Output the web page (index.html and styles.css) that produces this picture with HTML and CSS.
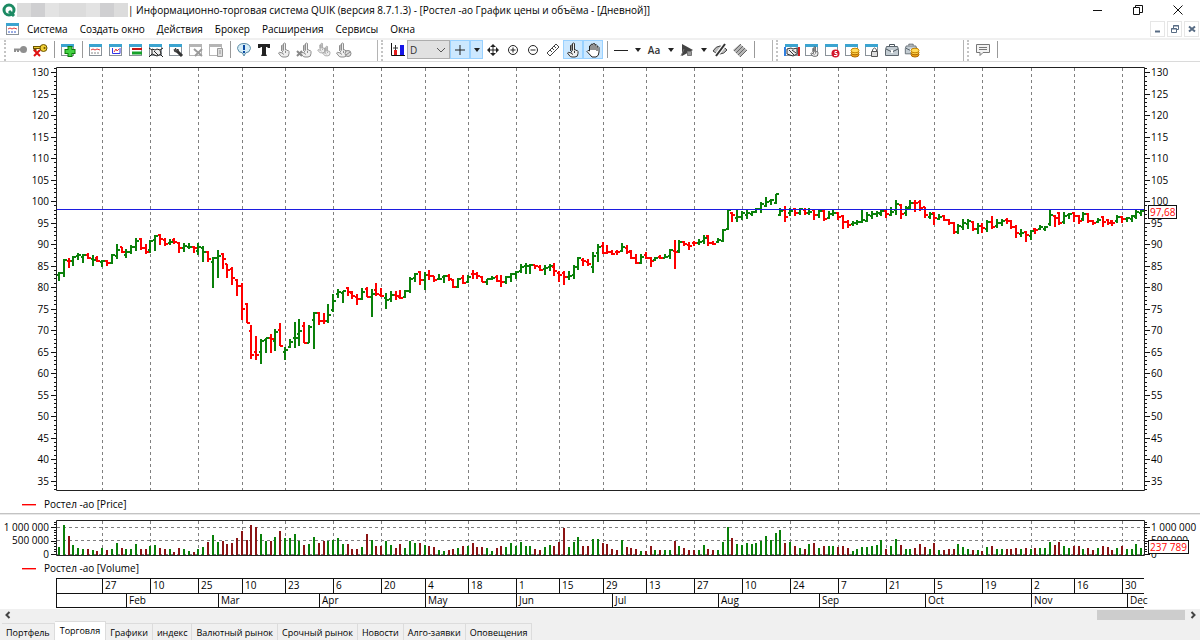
FILE: index.html
```html
<!DOCTYPE html>
<html lang="ru">
<head>
    <meta charset="UTF-8">
    <meta name="viewport" content="width=device-width, initial-scale=1.0">
    <title>Информационно-торговая система QUIK</title>
    <link rel="stylesheet" href="styles.css">
</head>
<body>
    <svg class="sprite" aria-hidden="true">
        <symbol id="win" viewBox="0 0 16 16">
            <rect x="1.500" y="2.500" width="12" height="11" fill="#fff" stroke="#8a9299"/>
            <rect x="1" y="2" width="13" height="3" fill="#3ba4d0"/>
        </symbol>
        <symbol id="win-gray" viewBox="0 0 16 16">
            <rect x="1.500" y="2.500" width="12" height="11" fill="#fff" stroke="#b5b5b5"/>
            <rect x="1" y="2" width="13" height="3" fill="#b5b5b5"/>
        </symbol>
        <symbol id="point-hand" viewBox="0 0 16 16">
            <path d="M5.500 9V3.500q.8-1 1.500 0V8M7.500 8V1.500q1-1 2 0V8q1.500-.8 1.500 .5q1.500-.6 2 1v2q0 3.500-3 3.500H7q-2 0-3-2L2.500 11q1-1.500 3 0zM6 11l2 1.500M9.500 9v2" fill="#eee" stroke="currentColor"/>
        </symbol>
        <symbol id="coins" viewBox="0 0 16 16">
            <ellipse cx="11" cy="12.500" rx="4" ry="2.500" fill="#f0a31c" stroke="#ad6b00"/>
            <ellipse cx="11" cy="10.500" rx="4" ry="2.300" fill="#ffd34d" stroke="#ad6b00"/>
            <ellipse cx="11" cy="8.500" rx="4" ry="2.300" fill="#ffdc5e" stroke="#c78500"/>
        </symbol>
        <symbol id="case" viewBox="0 0 16 16">
            <path d="M5.500 4V2.500h5V4" fill="none" stroke="#49545c"/>
            <path d="M2.500 4.500h11l1 3v6h-13v-6z" fill="#c3ccd2" stroke="#5c666e"/>
            <path d="M2 7l6 3 6-3" fill="none" stroke="#4c565e"/>
            <rect x="7" y="8" width="2" height="3" fill="#fff"/>
        </symbol>
    </svg>

    <header class="titlebar">
        <svg class="logo" viewBox="0 0 16 16"><circle cx="8" cy="8" r="5" fill="none" stroke="#1c8a63" stroke-width="3"/><path d="M8 9l5 5" stroke="#1c8a63" stroke-width="3"/></svg>
        <span class="hidden-name"><i></i><i></i><i></i><i></i><i></i><i></i><i></i><i></i></span>
        <h1>| Информационно-торговая система QUIK (версия 8.7.1.3) - [Ростел -ао График цены и объёма - [Дневной]]</h1>
        <div class="window-buttons">
            <button aria-label="Свернуть"><svg viewBox="0 0 10 10"><path d="M0 5.500h9"/></svg></button>
            <button aria-label="Развернуть"><svg viewBox="0 0 10 10"><path d="M.5 2.500h6v7h-6zM2.500 2V.5h7v7H7"/></svg></button>
            <button aria-label="Закрыть"><svg viewBox="0 0 10 10"><path d="M.5.5l9 9M9.500.5l-9 9"/></svg></button>
        </div>
    </header>

    <nav class="menu">
        <svg class="menu-icon" viewBox="0 0 16 16"><use href="#win"/><path d="M3 8l2-1 2 1 2-1 3 1" fill="none" stroke="#e23b3b"/><path d="M3 11h9" stroke="#3558c8" stroke-dasharray="2 1"/></svg>
        <a href="#">Система</a>
        <a href="#">Создать окно</a>
        <a href="#">Действия</a>
        <a href="#">Брокер</a>
        <a href="#">Расширения</a>
        <a href="#">Сервисы</a>
        <a href="#">Окна</a>
        <div class="mdi-buttons">
            <button aria-label="Свернуть окно"><svg viewBox="0 0 8 8"><path d="M1 6.500h5" stroke-width="2"/></svg></button>
            <button aria-label="Восстановить окно"><svg viewBox="0 0 8 8"><path d="M.5 3.500h5v4h-5zM2.500 3V.5h5v4H6M2 1h6M0 4h6"/></svg></button>
            <button aria-label="Закрыть окно"><svg viewBox="0 0 8 8"><path d="M1 1.500l6 5M7 1.500l-6 5" stroke-width="2"/></svg></button>
        </div>
    </nav>

    <div class="toolbar">
        <div class="group group-main">
            <button aria-label="Подключиться"><svg viewBox="0 0 16 16"><path d="M2 7.500h8M3 8v2M6 8v2" stroke="#8f8f8f" stroke-width="2"/><circle cx="11.500" cy="7.500" r="3.500" fill="#8f8f8f"/></svg></button>
            <button aria-label="Отключиться"><svg viewBox="0 0 16 16"><path d="M1 5.500h8M3 6v3" stroke="#6b5400" stroke-width="3"/><path d="M2 5.500h7" stroke="#f1cf36"/><circle cx="11.500" cy="6" r="3.500" fill="#f1cf36" stroke="#6b5400"/><circle cx="12.500" cy="6" r="1" fill="#6b5400"/><path d="M2 8l6 6M8 8l-6 6" stroke="#e01010" stroke-width="2"/></svg></button>
            <span class="sep"></span>
            <button aria-label="Создать окно"><svg viewBox="0 0 16 16"><use href="#win"/><path d="M10 4v11M4.500 9.500h11" stroke="#0b7a0b" stroke-width="5"/><path d="M10 5v9M5.500 9.500h9" stroke="#43d143" stroke-width="3"/></svg></button>
            <span class="sep"></span>
            <button aria-label="Текущие торги"><svg viewBox="0 0 16 16"><use href="#win"/><path d="M3 8l2-1 2 1 2-1 3 1" fill="none" stroke="#e23b3b"/><path d="M3 11h9" stroke="#888" stroke-dasharray="2 1"/></svg></button>
            <button aria-label="График"><svg viewBox="0 0 16 16"><use href="#win"/><path d="M4.500 6v5.500H12V6" fill="none" stroke="#3434e6"/><path d="M6 10l2-3 1 2 2-2" fill="none" stroke="#e23b3b"/></svg></button>
            <button aria-label="Котировки"><svg viewBox="0 0 16 16"><use href="#win"/><path d="M4 7h10" stroke="#c41515" stroke-width="2"/><path d="M4 11h10" stroke="#17a22b" stroke-width="3"/></svg></button>
            <button aria-label="Сделки"><svg viewBox="0 0 16 16"><use href="#win"/><path d="M1 15l3-3M15 15l-3-3M1 6l3 2M15 6l-3 2" stroke="#222"/><path d="M4 7l3 1 2-1 3 1 1 4-4 2-5-2z" fill="#eee" stroke="#222"/><path d="M6 9l4 4" stroke="#222"/></svg></button>
            <button aria-label="Настройка"><svg viewBox="0 0 16 16"><use href="#win"/><path d="M9 9l5 5" stroke="#333" stroke-width="3"/><path d="M6 7.500q0 3 3 2.500 2-1 1-3L8.500 8.500 7.500 6" fill="#555" stroke="#333"/></svg></button>
            <button aria-label="Удалить"><svg viewBox="0 0 16 16"><use href="#win-gray"/><path d="M6 7l8 7M14 7l-7 7" stroke="#9b9b9b" stroke-width="2"/></svg></button>
            <button aria-label="Экспорт"><svg viewBox="0 0 16 16"><use href="#win-gray"/><path d="M9.500 6.500h5v8h-5zM11 9h2M11 11h2" fill="#ddd" stroke="#999"/></svg></button>
            <span class="sep"></span>
            <button aria-label="Сообщения"><svg viewBox="0 0 16 16"><path d="M8 1.500q6 0 6.500 5-.5 4-5 4.500L8 14l-1.500-3q-4.500-.5-5-4.500 .5-5 6.500-5z" fill="#d5edf8" stroke="#5a8ba5"/><path d="M8 3v5M8 9v2" stroke="#0b4aa2" stroke-width="2"/></svg></button>
            <button aria-label="Текст"><svg viewBox="0 0 16 16"><path d="M2 6V2h12v4h-2l-1-1H10v7l1 2H5l1-2V5H5L4 6z" fill="#222"/></svg></button>
            <button class="off" aria-label="Заявка"><svg viewBox="0 0 16 16"><use href="#point-hand"/></svg></button>
            <button class="off" aria-label="Снять заявку"><svg viewBox="0 0 16 16"><use href="#point-hand" x="2" width="16" height="16"/><path d="M1 9l5 5M6 9l-5 5" stroke="#888" stroke-width="2"/></svg></button>
            <button class="off" aria-label="Две заявки"><svg viewBox="0 0 16 16"><use href="#point-hand" width="11" height="12"/><use href="#point-hand" x="5" y="3" width="11" height="12"/></svg></button>
            <button class="off" aria-label="Стоп-заявка"><svg viewBox="0 0 16 16"><use href="#point-hand" x="-2" width="16" height="16"/><circle cx="12" cy="11.500" r="3" fill="#ddd" stroke="#888"/><path d="M10 13l4-3" stroke="#888"/></svg></button>
        </div>

        <div class="group group-chart">
            <button aria-label="Тип графика"><svg viewBox="0 0 16 16"><path d="M2.500 1v12.500H16" fill="none" stroke="#111"/><path d="M4 6h5M6.500 3v6" stroke="#333"/><path d="M5 8h3v5H5z" fill="#e21b1b"/><path d="M11 3h4v10h-4z" fill="#1515e8"/></svg></button>
            <select aria-label="Интервал"><option>D</option></select>
            <button class="on" aria-label="Перекрестие"><svg viewBox="0 0 16 16"><path d="M8 3v10M3 8h10" stroke="#222"/></svg></button>
            <button class="on drop" aria-label="Вид перекрестия"></button>
            <button aria-label="Переместить"><svg viewBox="0 0 16 16"><path d="M8 3v10M3 8h10" stroke="#222"/><path d="M8 2l3 3H5zM8 14l3-3H5zM2 8l3-3v6zM14 8l-3-3v6z" fill="#222"/></svg></button>
            <button aria-label="Увеличить"><svg viewBox="0 0 16 16"><circle cx="8" cy="8" r="4.500" fill="none" stroke="#222"/><path d="M5.500 8h5M8 5.500v5" stroke="#222"/></svg></button>
            <button aria-label="Уменьшить"><svg viewBox="0 0 16 16"><circle cx="8" cy="8" r="4.500" fill="none" stroke="#222"/><path d="M5.500 8h5" stroke="#222"/></svg></button>
            <button aria-label="Линейка"><svg viewBox="0 0 16 16"><path d="M2 11l9-9 3 3-9 9zM5 8l2 2M7 6l2 2M9 4l2 2" fill="#fff" stroke="#444"/></svg></button>
            <button class="on" aria-label="Выбор"><svg viewBox="0 0 16 16"><use href="#point-hand"/></svg></button>
            <button class="on" aria-label="Рука"><svg viewBox="0 0 16 16"><path d="M4.500 9V4q1-1 1.500 0V2.500q1-1 2 0V2q1-1 2 0v1q1.500-1 2 .5V5q1.500-1 2 .5V10q0 4-3 5H7L2 9.500Q3 7.500 4.500 9zM6 4v4M8 3v5M10 3v5M12 5v4" fill="#fff" stroke="#222"/></svg></button>
            <span class="sep"></span>
            <button aria-label="Линия"><svg viewBox="0 0 16 16"><path d="M1 8.500h14" stroke="#222"/></svg></button>
            <button class="drop" aria-label="Виды линий"></button>
            <button class="letters">Aa</button>
            <button class="drop" aria-label="Шрифты"></button>
            <button aria-label="Фигуры"><svg viewBox="0 0 16 16"><path d="M3 2l11 6-11 6z" fill="#444"/><path d="M2 14l3-7M8.500 9.500h4v4h-4z" fill="#999" stroke="#777"/></svg></button>
            <button class="drop" aria-label="Виды фигур"></button>
            <button aria-label="Скрыть"><svg viewBox="0 0 16 16"><path d="M1 9q3-5 7-5 4 0 7 4-3 4-7 4-4 0-7-3z" fill="#bbb" stroke="#444"/><path d="M4 14l9-12" stroke="#fff" stroke-width="4"/><path d="M4 14l9-12" stroke="#333" stroke-width="2"/></svg></button>
            <button aria-label="Слои"><svg viewBox="0 0 16 16"><path d="M1 8l7-6 7 6-7 7z" fill="#b5b5b5"/><path d="M2 9l7-7M4 11l7-7M6 13l7-7M8 15l7-7" stroke="#666"/></svg></button>
            <span class="sep"></span>
        </div>

        <div class="group group-trade">
            <button aria-label="Сделки клиента"><svg viewBox="0 0 16 16"><use href="#win"/><path d="M3 7l4-1 2 1 4-1v6l-4 2-6-2z" fill="#eee" stroke="#333"/><path d="M5 8l5 5M8 8l4 3" stroke="#333"/><path d="M1 5v9" stroke="#2f7fe0" stroke-width="2"/><path d="M15 5v9" stroke="#d02020" stroke-width="2"/></svg></button>
            <button aria-label="Заявки"><svg viewBox="0 0 16 16"><use href="#win"/><use href="#point-hand" x="5" y="4" width="11" height="11"/></svg></button>
            <button aria-label="Стоп-заявки"><svg viewBox="0 0 16 16"><use href="#win"/><circle cx="11.500" cy="11.500" r="4" fill="#d3182e"/><path d="M13 9.500h-2v2h2v2h-3" fill="none" stroke="#fff"/></svg></button>
            <button aria-label="Деньги"><svg viewBox="0 0 16 16"><use href="#win"/><use href="#coins"/></svg></button>
            <button aria-label="Ограничения"><svg viewBox="0 0 16 16"><use href="#win"/><path d="M8.500 9V8q2-4 4 0v1" fill="none" stroke="#555"/><path d="M7.500 9.500h6v5h-6z" fill="#ddd" stroke="#555"/></svg></button>
            <button aria-label="Портфель клиента"><svg viewBox="0 0 16 16"><use href="#case"/></svg></button>
            <button aria-label="Портфель и деньги"><svg viewBox="0 0 16 16"><use href="#case" width="14" height="14"/><use href="#coins"/></svg></button>
        </div>

        <div class="group">
            <button aria-label="Чат"><svg viewBox="0 0 16 16"><path d="M1.500 2.500h13v8H8l-3 3v-3H1.500z" fill="#f3f3f3" stroke="#777"/><path d="M4 5.500h8M4 7.500h8" stroke="#777"/></svg></button>
            <span class="sep"></span>
        </div>
    </div>

    <main class="chart">
        <svg id="price" class="price"></svg>
        <p class="legend">Ростел -ао [Price]</p>
        <div class="splitter"></div>
        <svg id="volume" class="volume"></svg>
        <p class="legend">Ростел -ао [Volume]</p>
        <svg id="dates" class="dates"></svg>
    </main>

    <div class="scrollbar">
        <button aria-label="Влево"><svg viewBox="0 0 8 8"><path d="M5.500 1l-3 3 3 3"/></svg></button>
        <span class="thumb"></span>
        <button aria-label="Вправо"><svg viewBox="0 0 8 8"><path d="M2.500 1l3 3-3 3"/></svg></button>
    </div>

    <nav class="tabs">
        <a href="#">Портфель</a>
        <a href="#" class="active">Торговля</a>
        <a href="#">Графики</a>
        <a href="#">индекс</a>
        <a href="#">Валютный рынок</a>
        <a href="#">Срочный рынок</a>
        <a href="#">Новости</a>
        <a href="#">Алго-заявки</a>
        <a href="#">Оповещения</a>
    </nav>

    <script src="chart.js"></script>
</body>
</html>
```

FILE: styles.css
```css
* {
    box-sizing: border-box;
}
body {
    margin: 0;
    min-height: 100vh;
    display: flex;
    flex-direction: column;
    background: #fff;
    color: #000;
    font-family: "Open Sans", "Noto Sans", sans-serif;
    font-size: 10px;
    overflow: hidden;
}
button {
    border: 0;
    padding: 0;
    background: none;
    display: flex;
    align-items: center;
    justify-content: center;
    font: inherit;
    color: #333;
}
a {
    color: inherit;
    text-decoration: none;
}
.sprite {
    display: none;
}

/* title */
.titlebar {
    display: flex;
    align-items: center;
    height: 20px;
    padding: 0 2px 0 1px;
}
.titlebar h1 {
    margin: 0;
    font-size: 10px;
    font-weight: 400;
    white-space: nowrap;
}
.logo {
    width: 16px;
    height: 16px;
}
.hidden-name {
    display: flex;
    width: 111px;
    height: 14px;
}
.hidden-name i {
    flex: 1;
    background: #dcdcdc;
}
.hidden-name i:nth-child(2),
.hidden-name i:nth-child(7) {
    background: #cfcfd1;
}
.hidden-name i:nth-child(3n) {
    background: #e3e3e3;
}
.window-buttons {
    display: flex;
    margin-left: auto;
}
.window-buttons button {
    width: 40px;
    height: 18px;
}
.window-buttons svg {
    width: 10px;
    height: 10px;
    fill: none;
    stroke: #111;
}

/* menu */
.menu {
    display: flex;
    align-items: center;
    gap: 12px;
    height: 18px;
    padding: 0 1px 0 5px;
}
.menu-icon {
    width: 16px;
    height: 16px;
    margin-right: -6px;
}
.mdi-buttons {
    display: flex;
    gap: 2px;
    margin-left: auto;
}
.mdi-buttons button {
    width: 15px;
    height: 16px;
    border: 1px solid #e6e6e6;
}
.mdi-buttons svg {
    width: 8px;
    height: 8px;
    fill: none;
    stroke: #586c84;
}

/* toolbar */
.toolbar {
    display: flex;
    height: 24px;
    border-top: 2px solid #f0f0f0;
    border-bottom: 1px solid #dadada;
}
.group {
    display: flex;
    align-items: center;
    margin-left: 3px;
    padding: 0 0 2px 4px;
    border-left: 2px dotted #c4c4c4;
}
.group-main {
    flex: 0 0 374px;
    margin-left: 4px;
    border-right: 1px solid #b4b4b4;
}
.group-chart {
    flex: 0 0 392px;
    border-right: 1px solid #b4b4b4;
}
.group-trade {
    flex: 0 0 188px;
    border-right: 1px solid #b4b4b4;
}
.group button {
    width: 20px;
    height: 19px;
}
.group svg {
    width: 16px;
    height: 16px;
    flex: none;
    fill: none;
}
.group .off {
    color: #8d8d8d;
}
.group .on {
    background: #cce8ff;
    border: 1px solid #99d1ff;
}
.group .drop {
    width: 13px;
}
.drop::after {
    content: "";
    border: 3px solid transparent;
    border-top: 4px solid #222;
    border-bottom: 0;
}
.group .letters {
    font-weight: 600;
}
.sep {
    width: 8px;
    height: 17px;
    background: linear-gradient(#999, #999) center / 1px 100% no-repeat;
}
select {
    width: 43px;
    height: 19px;
    padding: 0 2px;
    border: 1px solid #adadad;
    border-radius: 0;
    appearance: none;
    font: inherit;
    color: #333;
    background: #e1e1e1;
    background-image: linear-gradient(45deg, transparent 45%, #555 45%, #555 60%, transparent 60%), linear-gradient(-45deg, transparent 45%, #555 45%, #555 60%, transparent 60%);
    background-position: right 8px center, right 4px center;
    background-size: 4px 4px;
    background-repeat: no-repeat;
}

/* chart */
.chart {
    flex: 1;
    display: flex;
    flex-direction: column;
}
.chart svg {
    width: 100%;
}
.price {
    height: 434px;
}
.volume {
    height: 45px;
}
.dates {
    height: 31px;
    margin-top: 1px;
}
.legend {
    display: flex;
    align-items: center;
    gap: 8px;
    margin: 0;
    height: 17px;
    padding: 0 0 1px 22px;
}
.legend::before {
    content: "";
    width: 14px;
    height: 1px;
    background: #f00;
    box-shadow: 0 1px #f99;
}
.splitter {
    height: 2px;
    background: #c3c3c3;
    border-bottom: 1px solid #e8e8e8;
}
.frame {
    fill: none;
    stroke: #222;
}
.tick {
    stroke: #111;
}
.grid {
    stroke: #808080;
    stroke-dasharray: 3 3;
}
.chart .now {
    stroke: #1c1ce0;
}
.up {
    stroke: #0a800a;
}
.down {
    stroke: #f00;
}
.vol-down {
    stroke: #8b1414;
}
.bar {
    fill: none;
    stroke-width: 2;
}
.mark rect {
    fill: #fff;
    stroke: #111;
}
.mark text {
    fill: #f00;
}

/* bottom */
.scrollbar {
    display: flex;
    align-items: center;
    height: 12px;
    background: #f0f0f0;
}
.scrollbar button {
    width: 15px;
    height: 12px;
}
.scrollbar svg {
    width: 8px;
    height: 8px;
    fill: none;
    stroke: #444;
    stroke-width: 2;
}
.thumb {
    width: 88px;
    height: 10px;
    margin-left: auto;
    background: #cdcdcd;
}
.tabs {
    display: flex;
    align-items: flex-end;
    height: 19px;
    padding-left: 2px;
    background: #f0f0f0;
    font-size: 9px;
}
.tabs a {
    height: 17px;
    padding: 0 4px;
    line-height: 18px;
    white-space: nowrap;
    border: 1px solid #dcdcdc;
    border-width: 1px 1px 0 0;
}
.tabs .active {
    height: 19px;
    padding: 0 5px;
    background: #fff;
}
```

FILE: chart.js
```js
// one bar per trading day: colour, high, low, open, close, volume
// levels are counted down the price scale, 201 is the 100 mark
const days = `
g 272 281 275 273 8|g 259 277 273 260 30|r 258 268 261 261 19|g 256 266 261 257 10|g 253 260 256 255 7
g 254 263 257 255 6|r 253 259 255 258 6|g 255 266 259 260 5|r 256 262 258 261 4|g 260 267 262 261 7
r 260 266 261 263 5|g 254 264 263 255 6|g 244 259 256 250 12|r 247 253 247 252 7|g 249 258 255 252 6
g 245 254 252 247 6|g 238 251 247 241 11|r 238 250 239 248 6|r 244 254 248 252 6|g 240 253 250 241 9
g 235 251 240 236 10|r 234 245 235 239 7|r 238 246 240 244 6|g 239 245 243 242 6|r 238 244 240 242 3
r 242 253 243 248 7|g 243 252 248 246 6|g 243 249 247 247 4|r 246 253 247 248 3|g 243 255 251 247 6
g 246 262 248 252 8|r 251 262 252 259 13|g 257 288 262 258 20|g 250 278 258 256 13|r 253 269 254 259 14
r 264 278 264 270 11|r 267 285 269 278 12|r 279 296 280 286 17|r 283 320 286 309 24|r 303 323 304 323 15
r 325 359 331 355 30|r 336 360 352 355 28|g 339 364 352 341 21|g 338 353 340 338 14|r 334 353 338 339 14
g 329 351 341 332 18|r 323 346 330 346 24|g 347 360 352 350 17|g 339 348 347 342 17|g 322 348 338 338 21
g 319 346 334 331 14|r 322 343 326 343 10|g 325 343 343 327 11|g 312 349 320 313 18|r 312 325 313 321 12
r 313 324 321 321 14|g 304 323 321 315 14|g 294 312 310 301 15|g 289 298 294 292 17|g 291 303 293 291 11
r 287 296 288 292 11|r 291 299 293 296 6|r 294 305 297 299 6|g 288 300 299 292 8|r 287 297 289 297 21
g 289 317 297 294 15|r 283 296 290 294 9|r 288 297 295 296 9|g 293 309 298 300 14|g 291 302 299 295 10
r 291 300 295 296 7|r 290 299 297 298 11|g 290 298 297 291 7|g 277 293 291 279 14|g 273 282 278 274 12
r 271 285 272 280 12|g 272 290 280 275 10|r 270 280 275 276 9|r 276 282 276 280 8|g 274 280 279 279 5
g 275 283 277 276 4|r 274 281 276 279 5|r 279 288 280 287 6|g 278 288 287 279 7|r 275 284 278 283 9
g 275 283 282 277 9|r 270 279 274 274 12|r 272 279 274 276 8|r 276 282 277 282 8|g 279 285 282 279 7
g 276 280 279 278 4|r 275 282 277 281 7|r 275 287 281 282 9|g 276 284 282 277 8|g 273 282 277 274 12
g 271 279 274 272 9|g 264 273 271 267 13|g 263 274 266 266 9|g 264 274 266 265 9|r 265 269 265 266 6
r 265 271 267 270 5|g 265 275 269 268 8|g 264 271 267 266 10|r 263 276 267 271 9|r 271 282 273 275 13
r 271 285 273 277 27|g 271 280 277 276 8|g 265 279 275 267 13|g 257 270 267 258 18|r 258 266 260 261 9
r 259 266 262 264 9|g 252 273 267 256 16|g 244 262 253 247 16|r 242 254 246 253 12|r 245 254 253 252 11
r 250 255 252 254 6|r 250 255 252 252 5|g 243 252 251 247 15|r 245 254 248 252 8|r 250 259 251 258 7
r 254 264 258 263 6|g 254 264 263 257 4|r 252 259 255 258 4|r 257 267 258 261 9|g 257 261 260 258 5
r 255 259 257 258 5|g 254 258 258 257 5|g 249 259 256 250 5|r 240 269 251 252 14|g 240 253 251 242 9
r 241 246 242 244 7|r 242 250 245 246 5|r 241 246 243 243 5|g 239 245 243 242 5|g 235 244 241 238 10
r 235 246 236 243 6|r 241 245 243 244 5|g 238 243 242 240 5|g 229 242 241 230 13|g 210 230 229 210 28
r 212 222 213 215 17|g 210 222 218 217 11|g 211 220 217 213 10|g 210 219 215 213 12|g 211 216 214 212 11
g 208 213 212 209 12|g 202 213 209 204 14|g 197 207 206 202 19|g 199 205 201 200 15|g 194 204 203 194 22
g 208 216 215 211 25|r 206 222 210 217 12|g 208 216 213 211 13|r 208 216 209 213 9|g 208 215 213 209 7
r 208 215 210 213 6|g 208 215 213 212 11|r 209 220 210 215 12|g 210 218 215 211 7|r 210 221 211 219 9
g 211 219 218 214 9|g 210 216 214 213 9|r 212 220 213 217 8|r 215 229 216 222 9|r 220 228 222 225 7
g 221 226 224 223 4|g 220 225 223 222 6|g 209 223 222 220 8|g 212 222 221 215 8|g 211 219 216 214 9
g 211 217 214 213 10|g 210 216 214 211 15|r 209 218 211 214 6|g 207 216 215 212 9|g 200 215 210 204 16
r 204 219 205 214 10|g 206 216 213 208 6|g 200 210 207 203 6|r 200 212 203 203 7|r 200 211 202 208 11
r 207 218 207 215 8|g 212 219 217 214 6|r 212 225 213 218 12|g 214 220 219 217 5|r 215 221 216 220 5
r 219 225 220 223 6|r 222 234 223 232 6|g 224 234 232 226 11|g 219 230 227 223 8|g 219 229 224 221 6
r 221 231 222 229 5|g 223 234 229 226 5|r 223 233 226 228 4|g 220 232 229 222 8|r 216 229 222 227 9
g 219 228 226 223 6|g 219 226 223 221 6|r 218 224 220 221 6|r 220 229 221 227 6|r 225 238 227 233 7
g 229 237 234 233 6|r 231 242 232 235 7|g 230 240 236 231 6|r 228 234 229 230 7|g 225 230 229 227 7
g 226 231 229 227 7|g 210 226 224 215 13|r 215 227 216 218 10|r 212 225 213 223 13|g 212 224 222 216 9
g 213 219 215 214 7|r 212 222 213 216 9|r 215 224 216 221 9|g 212 221 219 214 6|r 213 223 214 221 7
r 220 225 221 223 5|g 218 223 222 220 7|r 216 227 217 222 9|r 219 225 220 223 8|r 220 226 221 223 5
g 215 223 221 217 7|r 216 223 217 219 9|g 217 222 219 218 6|g 215 222 219 216 6|g 210 219 217 212 11
g 210 216 213 211 7`.trim().split(/[|\n]/).map(row => row.split(' '));

const dates = [[9, 27], [19, 10], [29, 25], [38, 10], [47, 23], [57, 6], [67, 20], [76, 4], [85, 18], [95, 1], [104, 15], [113, 29],
    [122, 13], [132, 27], [142, 10], [152, 24], [162, 7], [172, 21], [182, 5], [192, 19], [202, 2], [211, 16], [221, 30]];
const months = [[14, 'Feb'], [33, 'Mar'], [54, 'Apr'], [76, 'May'], [95, 'Jun'], [115, 'Jul'], [137, 'Aug'], [158, 'Sep'],
    [180, 'Oct'], [202, 'Nov'], [222, 'Dec']];

const left = 57;
const rightMargin = 56;

function line(x1, y1, x2, y2, cls) {
    return `<path class="${cls}" d="M${x1} ${y1}L${x2} ${y2}" shape-rendering="crispEdges"/>`;
}

function text(x, y, value, anchor = 'start') {
    return `<text x="${x}" y="${y}" text-anchor="${anchor}">${value}</text>`;
}

function draw() {
    const width = document.getElementById('price').clientWidth;
    const right = width - rightMargin;
    const x = i => Math.round(left + 2 + i * (right - left) / 226);
    const gridX = i => x(i) + 0.5;

    // price
    const top = 5.5;
    const bottom = 428.5;
    const levelY = v => v - 62;
    const priceY = p => Math.round(levelY(201) + (100 - p) * 4.3) + 0.5;
    let svg = '';
    dates.forEach(([i]) => svg += line(gridX(i), top, gridX(i), bottom, 'grid'));
    for (let p = 33; p <= 131; p++) {
        const size = p % 5 ? 3 : 6;
        const y = priceY(p);
        svg += line(left - size, y, left, y, 'tick') + line(right, y, right + size, y, 'tick');
        if (p % 5 === 0) {
            svg += text(left - 8, y + 3.5, p, 'end') + text(right + 7, y + 3.5, p);
        }
    }
    days.forEach(([color, high, low, open, close], i) => {
        svg += `<path class="bar ${color === 'g' ? 'up' : 'down'}" shape-rendering="crispEdges" d="M${x(i)} ${levelY(high)}V${levelY(low)}"/>`;
        svg += `<path class="bar ${color === 'g' ? 'up' : 'down'}" shape-rendering="crispEdges" d="M${x(i) - 2} ${levelY(open)}h2M${x(i)} ${levelY(close)}h3"/>`;
    });
    svg += line(left, 147.5, right, 147.5, 'now');
    svg += `<path class="frame" d="M${left - 0.5} ${top}H${right + 0.5}V${bottom}H${left - 0.5}Z"/>`;
    svg += `<g class="mark"><rect x="${right + 4.5}" y="143.5" width="28" height="13"/>${text(right + 6, 153.5, '97,68')}</g>`;
    document.getElementById('price').innerHTML = svg;

    // volume
    svg = '';
    dates.forEach(([i]) => svg += line(gridX(i), 5.5, gridX(i), 40.5, 'grid'));
    [12.5, 25.5, 39.5].forEach(y => svg += line(left, y, right, y, 'grid'));
    for (let k = 0; k <= 12; k++) {
        const y = Math.round(39 - k * 2.7) + 0.5;
        const size = k % 5 ? 3 : 6;
        svg += line(left - size, y, left, y, 'tick') + line(right, y, right + size, y, 'tick');
    }
    [['1 000 000', 16], ['500 000', 29], ['0', 43]].forEach(([label, y]) => {
        svg += text(left - 8, y, label, 'end') + text(right + 7, y, label);
    });
    days.forEach((day, i) => {
        svg += `<path class="bar ${day[0] === 'g' ? 'up' : 'vol-down'}" shape-rendering="crispEdges" d="M${x(i)} 40v-${day[5]}"/>`;
    });
    svg += `<path class="frame" d="M${left - 0.5} 5.5H${right + 0.5}V40.5H${left - 0.5}Z"/>`;
    svg += `<g class="mark"><rect x="${right + 4.5}" y="25.5" width="40" height="13"/>${text(right + 6, 35.5, '237 789')}</g>`;
    document.getElementById('volume').innerHTML = svg;

    // dates
    svg = '';
    [0.5, 15.5, 29.5].forEach(y => svg += line(left - 1, y, right, y, 'tick'));
    svg += line(left - 0.5, 0, left - 0.5, 30, 'tick');
    dates.forEach(([i, day]) => svg += line(gridX(i), 0, gridX(i), 15, 'tick') + text(x(i) + 3, 11, day));
    months.forEach(([i, month]) => svg += line(gridX(i), 15, gridX(i), 30, 'tick') + text(x(i) + 3, 26, month));
    document.getElementById('dates').innerHTML = svg;
}

window.onload = draw;
window.onresize = draw;
```
